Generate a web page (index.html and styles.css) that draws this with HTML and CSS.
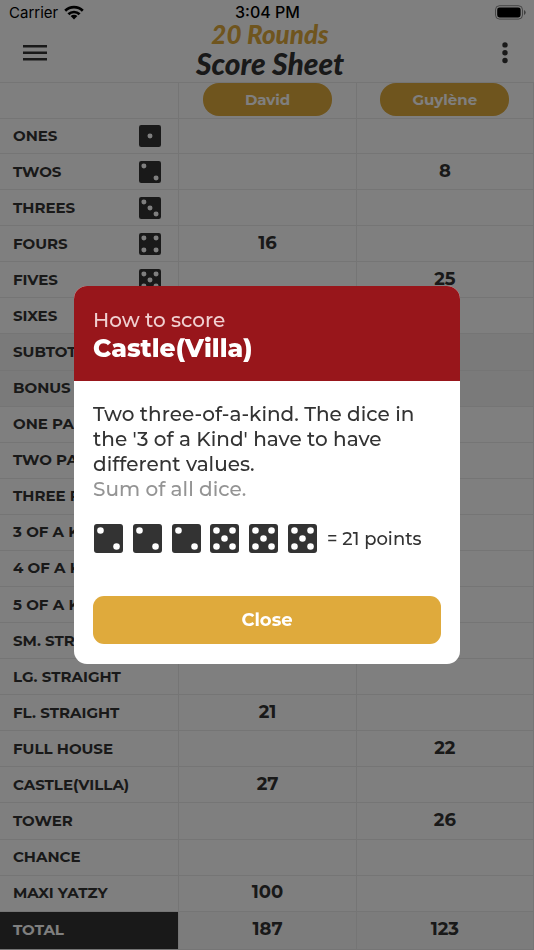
FILE: index.html
```html
<!DOCTYPE html>
<html lang="en">
<head>
<meta charset="utf-8">
<meta name="viewport" content="width=device-width, initial-scale=1">
<title>20 Rounds Score Sheet</title>
<link rel="stylesheet" href="styles.css">
</head>
<body>
<svg class="defs" aria-hidden="true">
  <symbol id="d1" viewBox="0 0 30 30"><rect width="30" height="30" rx="3"/><circle cx="15" cy="15" r="3.4"/></symbol>
  <symbol id="d2" viewBox="0 0 30 30"><rect width="30" height="30" rx="3"/><circle cx="6.7" cy="6.7" r="3.4"/><circle cx="23.3" cy="23.3" r="3.4"/></symbol>
  <symbol id="d3" viewBox="0 0 30 30"><rect width="30" height="30" rx="3"/><circle cx="6.7" cy="6.7" r="3.4"/><circle cx="15" cy="15" r="3.4"/><circle cx="23.3" cy="23.3" r="3.4"/></symbol>
  <symbol id="d4" viewBox="0 0 30 30"><rect width="30" height="30" rx="3"/><circle cx="6.7" cy="6.7" r="3.4"/><circle cx="23.3" cy="6.7" r="3.4"/><circle cx="6.7" cy="23.3" r="3.4"/><circle cx="23.3" cy="23.3" r="3.4"/></symbol>
  <symbol id="d5" viewBox="0 0 30 30"><rect width="30" height="30" rx="3"/><circle cx="6.7" cy="6.7" r="3.4"/><circle cx="23.3" cy="6.7" r="3.4"/><circle cx="15" cy="15" r="3.4"/><circle cx="6.7" cy="23.3" r="3.4"/><circle cx="23.3" cy="23.3" r="3.4"/></symbol>
  <symbol id="d6" viewBox="0 0 30 30"><rect width="30" height="30" rx="3"/><circle cx="6.7" cy="6.7" r="3.4"/><circle cx="23.3" cy="6.7" r="3.4"/><circle cx="6.7" cy="15" r="3.4"/><circle cx="23.3" cy="15" r="3.4"/><circle cx="6.7" cy="23.3" r="3.4"/><circle cx="23.3" cy="23.3" r="3.4"/></symbol>
</svg>
<div class="app">
  <div class="status">
    <span class="carrier">Carrier
      <svg class="wifi" viewBox="0 0 20 15" aria-hidden="true"><path d="M1.2 5.7a12.6 12.6 0 0 1 17.6 0M4.4 9.3a8 8 0 0 1 11.2 0" fill="none" stroke="#000" stroke-width="2.7"/><path d="M10 14.6l3.4-3.5a4.9 4.9 0 0 0-6.8 0z"/></svg>
    </span>
    <time class="clock">3:04 PM</time>
    <svg class="battery" viewBox="0 0 31 15" aria-hidden="true"><rect x=".5" y=".7" width="27" height="13.4" rx="4" fill="none" stroke="#000" stroke-opacity=".45"/><rect x="2.2" y="2.4" width="23.4" height="10" rx="2.3"/><path d="M29 5v5q1.7-.8 1.7-2.5t-1.7-2.5" fill-opacity=".5"/></svg>
  </div>
  <header class="bar">
    <button class="icon-button" aria-label="Menu"><svg class="icon" viewBox="0 0 24 24"><path d="M0 4h24v2.6H0zM0 10.4h24v2.6H0zM0 16.9h24v2.6H0z"/></svg></button>
    <h1 class="title"><span class="title-game">20 Rounds</span><span class="title-sheet">Score Sheet</span></h1>
    <button class="icon-button" aria-label="More options"><svg class="icon" viewBox="0 0 24 24"><circle cx="12" cy="3.9" r="2.7"/><circle cx="12" cy="11.7" r="2.7"/><circle cx="12" cy="19.5" r="2.7"/></svg></button>
  </header>
  <main class="sheet">
    <table class="scores">
      <thead>
        <tr><td class="names"></td><th scope="col"><span class="player">David</span></th><th scope="col"><span class="player">Guylène</span></th></tr>
      </thead>
      <tbody>
        <tr class="first"><th scope="row"><div class="label">ONES<svg class="die"><use href="#d1"/></svg></div></th><td></td><td></td></tr>
        <tr><th scope="row"><div class="label">TWOS<svg class="die"><use href="#d2"/></svg></div></th><td></td><td>8</td></tr>
        <tr><th scope="row"><div class="label">THREES<svg class="die"><use href="#d3"/></svg></div></th><td></td><td></td></tr>
        <tr><th scope="row"><div class="label">FOURS<svg class="die"><use href="#d4"/></svg></div></th><td>16</td><td></td></tr>
        <tr><th scope="row"><div class="label">FIVES<svg class="die"><use href="#d5"/></svg></div></th><td></td><td>25</td></tr>
        <tr><th scope="row"><div class="label">SIXES<svg class="die"><use href="#d6"/></svg></div></th><td></td><td></td></tr>
        <tr class="sum"><th scope="row"><div class="label">SUBTOTAL</div></th><td></td><td></td></tr>
        <tr class="sum"><th scope="row"><div class="label">BONUS</div></th><td></td><td></td></tr>
        <tr><th scope="row"><div class="label">ONE PAIR</div></th><td></td><td></td></tr>
        <tr><th scope="row"><div class="label">TWO PAIR</div></th><td></td><td></td></tr>
        <tr><th scope="row"><div class="label">THREE PAIR</div></th><td></td><td></td></tr>
        <tr><th scope="row"><div class="label">3 OF A KIND</div></th><td></td><td></td></tr>
        <tr><th scope="row"><div class="label">4 OF A KIND</div></th><td></td><td></td></tr>
        <tr><th scope="row"><div class="label">5 OF A KIND</div></th><td></td><td></td></tr>
        <tr><th scope="row"><div class="label">SM. STRAIGHT</div></th><td></td><td></td></tr>
        <tr><th scope="row"><div class="label">LG. STRAIGHT</div></th><td></td><td></td></tr>
        <tr><th scope="row"><div class="label">FL. STRAIGHT</div></th><td>21</td><td></td></tr>
        <tr><th scope="row"><div class="label">FULL HOUSE</div></th><td></td><td>22</td></tr>
        <tr><th scope="row"><div class="label">CASTLE(VILLA)</div></th><td>27</td><td></td></tr>
        <tr><th scope="row"><div class="label">TOWER</div></th><td></td><td>26</td></tr>
        <tr><th scope="row"><div class="label">CHANCE</div></th><td></td><td></td></tr>
        <tr><th scope="row"><div class="label">MAXI YATZY</div></th><td>100</td><td></td></tr>
        <tr class="total"><th scope="row"><div class="label">TOTAL</div></th><td>187</td><td>123</td></tr>
      </tbody>
    </table>
  </main>
</div>
<div class="overlay">
  <section class="modal" role="dialog" aria-modal="true" aria-labelledby="rule-name">
    <header class="modal-head">
      <p class="kicker">How to score</p>
      <h2 class="rule-name" id="rule-name">Castle(Villa)</h2>
    </header>
    <div class="modal-body">
      <p class="text">Two three-of-a-kind. The dice in the '3 of a Kind' have to have different values.</p>
      <p class="text muted">Sum of all dice.</p>
      <div class="example">
        <div class="dice">
          <svg class="die big"><use href="#d2"/></svg>
          <svg class="die big"><use href="#d2"/></svg>
          <svg class="die big"><use href="#d2"/></svg>
          <svg class="die big"><use href="#d5"/></svg>
          <svg class="die big"><use href="#d5"/></svg>
          <svg class="die big"><use href="#d5"/></svg>
        </div>
        <span class="points">= 21 points</span>
      </div>
      <button class="close">Close</button>
    </div>
  </section>
</div>
</body>
</html>
```
FILE: styles.css
```css
* { box-sizing: border-box; }

body {
  margin: 0;
  background: #fff;
  color: #333;
  font-family: Montserrat, Inter, "Open Sans", sans-serif;
}

h1, h2, p { margin: 0; }
button { border: 0; font: inherit; cursor: pointer; }

.defs { position: absolute; width: 0; height: 0; }

.app {
  display: flex;
  flex-direction: column;
  min-height: 100vh;
}

.status {
  display: grid;
  grid-template-columns: 1fr auto 1fr;
  align-items: center;
  height: 20px;
  padding: 5px 8px 0 9px;
  color: #000;
  font-family: Inter, sans-serif;
  font-size: 15px;
  line-height: 15px;
}
.carrier { display: flex; align-items: center; gap: 6px; }
.wifi { width: 20px; height: 15px; }
.clock { font-size: 16px; font-weight: 500; }
.battery { width: 31px; height: 15px; justify-self: end; }

.bar {
  display: flex;
  align-items: flex-start;
  justify-content: space-between;
  height: 62px;
  padding: 0 11px 0 17px;
}
.icon-button {
  display: flex;
  justify-content: center;
  width: 36px;
  padding: 21px 0 0;
  background: none;
}
.icon-button:last-child { justify-content: flex-end; padding-right: 6px; }
.icon { flex: none; width: 24px; height: 24px; fill: #333; }

.title {
  display: flex;
  flex-direction: column;
  align-items: center;
  font-family: Lato, sans-serif;
  font-style: italic;
  font-weight: 900;
  line-height: 29px;
}
.title-game { color: #dfaa3c; font-size: 26px; }
.title-sheet { font-size: 30px; }

.sheet {
  display: flex;
  height: calc(100vh - 82px);
  min-height: 868px;
}

.scores {
  width: 100%;
  height: 100%;
  table-layout: fixed;
  border-collapse: separate;
  border-spacing: 0;
  border-top: 1px solid #ebebeb;
}
.scores th, .scores td {
  height: 36px;
  padding: 0;
  border-right: 1px solid #ebebeb;
  border-bottom: 1px solid #ebebeb;
  font-size: 18px;
  font-weight: 700;
  line-height: 22px;
  text-align: center;
}
.scores td, .scores thead th { padding-bottom: 2px; }
.scores .names { width: 33.6%; }
.scores .first > * { height: 35px; }
.scores .total > * { height: 38px; }
.player {
  display: block;
  width: 129px;
  margin: 0 auto;
  border-radius: 16px;
  background: #dfaa3c;
  color: #fff;
  font-size: 15px;
  line-height: 33px;
}
.label {
  display: flex;
  align-items: center;
  justify-content: space-between;
  height: 24px;
  padding: 0 17px 0 13px;
  font-size: 15px;
  line-height: 24px;
  white-space: nowrap;
}
.sum td, .sum th { background: #f4f4f4; }
.total th { background: #333; color: #fff; }
.total td { background: #f9f9f9; }

.die { flex: none; width: 22px; height: 22px; fill: #333; }
.die.big { width: 29px; height: 29px; }
symbol circle { fill: #fff; }

.overlay {
  position: fixed;
  inset: 0;
  display: flex;
  align-items: center;
  justify-content: center;
  background: rgba(0, 0, 0, 0.5);
}

.modal {
  width: 90%;
  max-width: 386px;
  overflow: hidden;
  border-radius: 13px;
  background: #fff;
}
.modal-head {
  padding: 20px 19px 19px;
  background: #98161b;
  color: #fff;
}
.kicker { color: #f0d0d1; font-size: 20px; font-weight: 500; line-height: 28px; }
.rule-name { font-size: 25px; font-weight: 800; line-height: 28px; }

.modal-body { padding: 21px 19px 20px; }
.text { font-size: 20px; font-weight: 500; line-height: 25px; }
.muted { color: #949494; }

.example {
  display: flex;
  align-items: center;
  gap: 10px;
  padding: 22px 0 43px 1px;
}
.dice { display: flex; justify-content: space-between; width: 223px; }
.points { font-size: 18px; font-weight: 500; line-height: 28px; white-space: nowrap; }

.close {
  width: 100%;
  border-radius: 11px;
  background: #dfaa3c;
  color: #fff;
  font-size: 18px;
  font-weight: 700;
  line-height: 48px;
  padding: 0;
}
```
